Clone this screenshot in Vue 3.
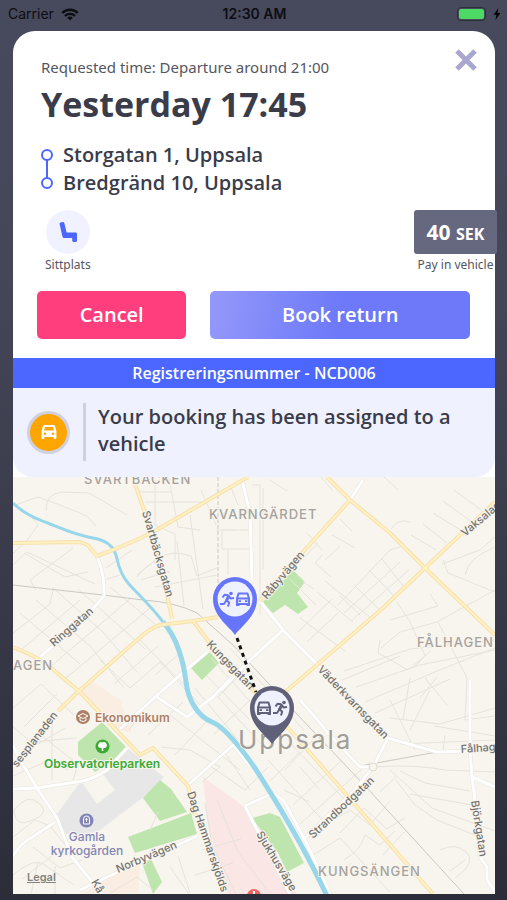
<template>
    <div class="screen">
        <header class="status-bar">
            <div class="carrier">
                <span>Carrier</span>
                <svg class="wifi" viewBox="0 0 18 13" aria-hidden="true">
                    <path d="M1.2 5 A11 11 0 0 1 16.8 5" />
                    <path d="M4 8 A7 7 0 0 1 14 8" />
                    <path class="solid" d="M9 12.6 L6.2 9.8 A4 4 0 0 1 11.8 9.8 Z" />
                </svg>
            </div>
            <span class="clock">12:30 AM</span>
            <div class="power">
                <span class="battery"><span class="charge"></span></span>
                <svg class="bolt" viewBox="0 0 8 12" aria-hidden="true">
                    <path d="M5.4 0 L0.6 6.8 H3.5 L2.4 12 L7.4 4.9 H4.4 Z" />
                </svg>
            </div>
        </header>

        <main class="card">
            <section class="details">
                <div class="heading">
                    <div>
                        <p class="requested">Requested time: Departure around 21:00</p>
                        <h1>Yesterday 17:45</h1>
                    </div>
                    <button class="close" type="button" aria-label="Close">
                        <svg viewBox="0 0 24 24"><path d="M3 3 L21 21 M21 3 L3 21" /></svg>
                    </button>
                </div>

                <div class="route">
                    <svg viewBox="0 0 14 42" aria-hidden="true">
                        <path d="M7 12 V30" />
                        <circle cx="7" cy="7" r="5" />
                        <circle cx="7" cy="35" r="5" />
                    </svg>
                    <ul>
                        <li v-for="stop in stops" :key="stop">{{ stop }}</li>
                    </ul>
                </div>

                <div class="travel">
                    <div class="seat">
                        <span class="seat-icon">
                            <svg viewBox="0 0 20 22" aria-hidden="true">
                                <path d="M1.6 3 Q1.4 1.8 2.6 1.4 L4.8 1 Q6 0.8 6.3 2 L8.6 11.4 H17.6 Q19 11.4 19 12.8 V19.5 Q19 21 17.6 21 H15.6 Q14.2 21 14.2 19.5 V17 H6.4 Q4.8 17 4.4 15.4 Z" />
                            </svg>
                        </span>
                        <span class="caption">Sittplats</span>
                    </div>
                    <div class="price">
                        <span class="amount">40 <small>SEK</small></span>
                        <span class="caption">Pay in vehicle</span>
                    </div>
                </div>

                <div class="actions">
                    <button class="cancel" type="button">Cancel</button>
                    <button class="return" type="button">Book return</button>
                </div>
            </section>

            <p class="registration">Registreringsnummer - NCD006</p>

            <section class="status">
                <span class="badge">
                    <svg viewBox="0 0 16 16" aria-hidden="true">
                        <path fill-rule="evenodd" d="M3.6 1 H12.4 Q13.8 1 14.2 2.4 L15.4 7 V14 Q15.4 15 14.4 15 H13.6 Q12.6 15 12.6 14 V13 H3.4 V14 Q3.4 15 2.4 15 H1.6 Q0.6 15 0.6 14 V7 L1.8 2.4 Q2.2 1 3.6 1 Z M4 3 L3.1 6.6 H12.9 L12 3 Z M4 8.4 A1.3 1.3 0 1 0 4 11 A1.3 1.3 0 1 0 4 8.4 Z M12 8.4 A1.3 1.3 0 1 0 12 11 A1.3 1.3 0 1 0 12 8.4 Z" />
                    </svg>
                </span>
                <p>Your booking has been assigned to a vehicle</p>
            </section>

            <section class="map">
                <svg viewBox="13 477 482 417" role="img" aria-label="Map of Uppsala">
                    <!-- areas -->
                    <path class="cemetery" d="M127 748 L164 777 L150 792 L100 830 L86 834 L64 834 L57 814 L78 785 L107 770 Z" />
                    <path class="land" d="M81 781 L103 774 L115 790 L97 804 Z" />
                    <path class="hospital" d="M203 777 L243 806 L250 818 L297 894 H228 L208 826 Z" />
                    <path class="built" d="M80 693 L92 681 L120 700 L132 733 L110 727 Z M107 877 L140 865 L138 893 H85 Z" />
                    <path class="park" v-for="d in parks" :key="d" :d="d" />

                    <!-- streets -->
                    <path class="minor" v-for="d in minorStreets" :key="d" :d="d" />
                    <path class="rail" v-for="d in railways" :key="d" :d="d" />
                    <path class="rail dashed" d="M218 477 V590" />
                    <path class="street-edge" v-for="d in streets" :key="'e' + d" :d="d" />
                    <path class="street" v-for="d in streets" :key="d" :d="d" />
                    <path class="river" d="M13 503 C25 515 40 520 50 524 S75 535 93 538 S115 550 117 559 S123 577 128 583 S152 607 163 622" />
                    <path class="river wide" d="M163 622 C178 638 184 665 186 682 S197 716 212 722 S250 760 260 776 S300 838 327 896" />
                    <path class="road-edge" v-for="d in roads" :key="'e' + d" :d="d" />
                    <path class="road" v-for="d in roads" :key="d" :d="d" />
                    <circle class="roundabout" cx="373" cy="767" r="4" />

                    <!-- labels -->
                    <text
                        v-for="label in streetLabels"
                        :key="label.name"
                        class="street-name"
                        :transform="`translate(${label.x} ${label.y}) rotate(${label.angle})`"
                    >{{ label.name }}</text>
                    <text
                        v-for="area in districts"
                        :key="area.name"
                        class="district"
                        :x="area.x"
                        :y="area.y"
                    >{{ area.name }}</text>
                    <text class="city" x="238" y="749">Uppsala</text>

                    <g class="place university">
                        <circle cx="83" cy="717" r="7" />
                        <path class="glyph" d="M78 716 L83 713.500 L88 716 L83 718.500 Z M80 718 V720.500 Q83 722.500 86 720.500 V718" />
                        <text x="95" y="722">Ekonomikum</text>
                    </g>
                    <g class="place green">
                        <circle cx="102.500" cy="746.500" r="7" />
                        <path class="glyph filled" d="M101.700 751 V748 H100 A2.500 2.500 0 1 1 102.500 742.500 A2.500 2.500 0 1 1 105 748 H103.300 V751 Z" />
                        <text x="102" y="768" text-anchor="middle">Observatorieparken</text>
                    </g>
                    <g class="place grave">
                        <circle cx="86.500" cy="820.500" r="7" />
                        <path class="glyph" d="M83.500 824 V819 A3 3 0 0 1 89.500 819 V824 Z M86.500 818 V822 M85.300 819.300 H87.700" />
                        <text x="87" y="841" text-anchor="middle">Gamla</text>
                        <text x="87" y="855" text-anchor="middle">kyrkogården</text>
                    </g>
                    <circle class="hospital-mark" cx="254" cy="896" r="7" />
                    <path class="hospital-cross" d="M254 891 V894" />

                    <!-- trip -->
                    <path class="trip" d="M237 638 L256 692" />
                    <g v-for="pin in pins" :key="pin.kind" :class="['pin', pin.kind]" :transform="`translate(${pin.x} ${pin.y})`">
                        <path class="body" d="M0 36 C-4 29 -22 18 -22 0 A22 22 0 1 1 22 0 C22 18 4 29 0 36 Z" />
                        <circle class="face" r="17.500" />
                        <g :transform="`translate(${pin.runner} 0)`">
                            <circle class="head" cx="4" cy="-5.500" r="1.800" />
                            <path class="torso" d="M1.500 -2.500 L-0.500 1.500" />
                            <path class="limb" d="M2 -3 L3.500 -0.500 L7 -1 M1.500 -3.800 L-2.500 -4.200 L-4.500 -1.500 M-0.500 1.500 L2.200 3.500 L1 7.500 M-1 2 L-3 5 L-7 5" />
                        </g>
                        <g :transform="`translate(${pin.car} 0)`">
                            <path class="outline" d="M-4.500 -5.500 H4.500 L6 -0.500 V5 H-6 V-0.500 Z M-6 -0.500 H6" />
                            <path class="wheels" d="M-7 4 H-3.500 V7 H-7 Z M7 4 H3.500 V7 H7 Z M-4.500 1.200 H-2 V3 H-4.500 Z M4.500 1.200 H2 V3 H4.500 Z" />
                        </g>
                    </g>
                </svg>
                <a class="legal" href="#legal">Legal</a>
            </section>
        </main>
    </div>
</template>

<script setup>
const stops = ['Storgatan 1, Uppsala', 'Bredgränd 10, Uppsala'];

const pins = [
    { kind: 'pickup', x: 235, y: 599, runner: -8, car: 8 },
    { kind: 'dropoff', x: 272, y: 708, runner: 8, car: -8 },
];

const parks = [
    'M262 603 L273 613 L285 605 L298 614 L308 607 L297 593 L305 582 L293 570 Z',
    'M190 667 L202 680 L219 663 L210 652 Z',
    'M102 722 L127 748 L110 763 L95 772 L78 755 V742 Z',
    'M160 780 L143 798 L160 821 L187 812 L171 789 Z',
    'M128 837 L191 813 L197 834 L135 853 Z',
    'M141 860 L150 857 L162 882 L153 894 Z',
    'M252 818 L270 813 L280 817 L304 863 L287 872 L278 853 Z',
];

const roads = [
    'M13 543 L79 542 Q87 543 91 549 L97 556 Q125 546 153 532 L248 477',
    'M135 484 L145 513 L166 590 L172 619',
    'M218 617 L193 621 L160 625 Q150 628 137 640 L80 690 L58 711',
    'M13 647 Q40 658 50 667 L80 692 L140 755 L153 748 L188 786 L195 815',
    'M193 621 L213 647 L290 730 L433 894',
    'M327 477 L350 500 L390 533 L425 568 L495 635',
    'M350 500 L303 552 L260 601',
    'M495 502 L425 568 L383 608 L318 664 L270 705',
];

const streets = [
    'M97 556 Q105 575 104 596 L85 618 L40 657',
    'M363 480 L350 500',
    'M260 601 L283 630 L318 665 L360 709 L388 738 L437 752 L470 751 L495 746',
    'M283 630 L250 660 L221 690',
    'M207 652 L163 690 L120 729',
    'M127 748 L107 770 Q95 778 83 781 L37 788 L13 789',
    'M13 745 L20 760 L37 788 L57 818 L72 857 L102 894',
    'M13 856 Q22 842 31 838 L55 822',
    'M157 697 L187 717 L213 697 L233 676',
    'M188 785 L233 745 L250 766',
    'M197 836 L167 850 L107 877 L80 890',
    'M245 806 L273 793 L284 801 L305 840 L330 894',
    'M300 700 Q318 720 328 733 L360 767 L373 767 L388 738',
    'M373 767 L355 790 L303 840',
    'M470 680 L470 750 L472 777 L475 800 L480 857 L487 867 V880 L495 892',
    'M472 777 L495 787',
    'M242 480 L250 513 L252 580',
    'M245 806 L252 820 L290 894',
];

const railways = [
    'M13 585 L103 595 L143 600 Q175 602 197 613 L233 645 L293 710 L367 788 L464 894',
    'M360 766 L437 752 L495 748',
];

const minorStreets = [
    // west
    'M13 506 L38 497 L60 505 L87 516 L96 526',
    'M46 511 Q45 494 62 492 L89 493 L127 515',
    'M13 553 L25 543 L38 525 L30 515',
    'M24 553 L65 577 L88 572 M73 548 L30 580 L36 590',
    'M13 565 L27 552 L95 584',
    'M106 568 L132 550 M107 579 L120 575 M137 575 L153 562 L170 573',
    'M52 587 L103 632 L137 672 M36 600 L90 646 L124 688',
    'M20 613 L80 664 M78 589 L145 649 M13 633 L50 604 L53 590',
    'M22 649 L80 600 M50 667 L130 599 M66 678 L150 608',
    'M110 587 L160 628 M100 660 L130 688 L160 662 L200 705',
    'M140 640 L187 688 M155 675 L180 653 M114 684 L158 646',
    'M13 708 L41 684 L74 715 M24 727 L57 694 M13 727 L31 742 L76 738',
    'M40 734 L62 752 L78 764 L73 780 M52 719 V780 M29 749 L65 728',
    'M13 776 L50 760 L68 770 M14 810 Q28 792 40 804 T23 823 Q14 821 14 810',
    'M13 837 L35 820 L50 826 L66 846 M33 847 L60 868 L82 860 M22 879 L54 854',
    'M13 875 Q35 856 46 866 L74 885 M31 894 L38 862 M55 894 V866',
    // north
    'M138 492 H172 M145 502 H205 M155 480 V525 L175 534 V560 M169 478 L178 527 L200 530',
    'M153 562 Q170 548 191 556 L197 576 L217 568',
    'M137 577 L148 565 M141 580 L170 571 M177 541 L184 606 M155 587 L217 575',
    'M190 515 L203 609 M201 490 L216 525 M216 530 H235 M222 531 V549 H249 M249 530 H222',
    'M252 485 H260 V615 M263 488 V570 M230 485 L238 505 M228 575 V550',
    'M270 480 L287 491 M321 477 L333 491 M307 533 L322 550 M332 535 L355 548',
    'M318 543 L287 575 M340 519 L352 531 M340 546 L325 560 M290 579 L316 605',
    'M303 582 L314 589 M322 555 L315 563 L331 577 M300 618 L345 651',
    'M298 632 L332 599 M307 642 L339 612 M317 592 L353 622 M325 581 L370 617',
    // east
    'M338 605 L390 550 L404 546 M344 613 L400 562 M351 621 L409 570 M361 629 L416 579',
    'M340 596 L360 615 M354 585 L379 609 M369 570 L395 597 M382 559 L404 587',
    'M391 529 Q398 518 410 522 M411 535 L436 550 M423 524 L447 543 M433 513 L462 531',
    'M443 501 L472 522 M454 490 L481 510 M384 477 L398 490',
    'M443 560 L448 573 L495 592 M442 564 L480 550 L495 537 M465 575 Q468 558 495 547',
    'M380 640 L378 653 L408 670 L425 656 L410 622 L397 602',
    'M390 620 L438 606 L430 594 M381 648 L400 632 L437 622 L495 590',
    'M344 671 L410 649 L495 640 M342 680 L400 656 M356 687 L420 665 L495 650',
    'M365 702 L442 669 L495 648 M375 713 L450 679 M410 678 L403 720 M415 666 L430 651',
    'M438 622 L467 678 L465 720 L495 716 M425 678 L447 705 M390 718 L440 724 L495 708',
    'M420 698 L437 677 M434 726 L495 736 M410 730 L430 690 M400 744 L495 740',
    // centre
    'M211 658 L280 735 M230 648 L304 730 M244 671 L218 697 L262 745',
    'M258 655 L238 673 M206 675 L250 720 M195 688 L238 740 M214 734 L250 700',
    'M170 715 L240 770 M183 702 L148 735 M175 755 L208 720 M161 747 L190 750 L220 767 L202 782',
    'M207 764 L245 790 L268 767 M225 753 L250 790 M150 700 L129 730',
    'M285 770 L312 741 M270 781 L300 752 M293 805 L342 760 M300 824 L370 762',
    'M268 760 L325 823 M290 743 L345 800 M300 767 L320 790 M284 790 L310 802',
    // south
    'M205 803 L212 845 L236 894 M217 800 L238 852 L267 890 M202 850 L241 839 M195 875 L233 863',
    'M170 867 L189 894 M158 812 L150 830 M110 893 L137 877 L153 890 M178 856 L190 893',
    'M325 825 L350 810 L370 825 L390 801 M340 833 L364 808 L387 829 L405 818',
    'M344 860 Q361 850 365 835 L380 845 L395 831 M310 857 L340 838 L390 892',
    'M373 767 Q415 764 445 770 L495 772 M390 770 L432 808 L495 831',
    'M400 771 L425 783 L470 791 M410 794 L472 805 M396 780 L415 805 L437 820 L475 835',
    'M380 792 L397 776 M440 850 Q455 842 466 852 T455 878 M450 871 L465 860',
    'M383 855 L404 832 M340 875 L351 863 M445 735 L443 750 M390 700 L415 750',
];

const streetLabels = [
    { name: 'Svartbäcksgatan', x: 142, y: 512, angle: 74 },
    { name: 'Ringgatan', x: 54, y: 647, angle: -41 },
    { name: 'Kungsgatan', x: 206, y: 645, angle: 46 },
    { name: 'Råbyvägen', x: 267, y: 600, angle: -50 },
    { name: 'Vaksalag', x: 465, y: 537, angle: -40 },
    { name: 'Väderkvarnsgatan', x: 317, y: 670, angle: 46 },
    { name: 'Strandbodgatan', x: 313, y: 839, angle: -43 },
    { name: 'Björkgatan', x: 471, y: 801, angle: 81 },
    { name: 'Fålhag', x: 461, y: 753, angle: -4 },
    { name: 'Dag Hammarskjölds', x: 187, y: 793, angle: 71 },
    { name: 'Sjukhusväge', x: 256, y: 834, angle: 59 },
    { name: 'Norbyvägen', x: 118, y: 873, angle: -23 },
    { name: 'sesplanaden', x: 17, y: 768, angle: -52 },
    { name: 'Kå', x: 91, y: 882, angle: 60 },
];

const districts = [
    { name: 'SVARTBÄCKEN', x: 84, y: 484 },
    { name: 'KVARNGÄRDET', x: 209, y: 519 },
    { name: 'FÅLHAGEN', x: 417, y: 647 },
    { name: 'AGEN', x: 13, y: 670 },
    { name: 'KUNGSÄNGEN', x: 318, y: 876 },
];
</script>

<style>
body {
    margin: 0;
}
</style>

<style scoped>
.screen {
    --ink: #3a3c4a;
    --blue: #4b67ff;
    --indigo: #6d79f8;

    box-sizing: border-box;
    min-height: 100vh;
    padding: 0 12px 6px 13px;
    background: linear-gradient(#47495d, #454759 30%, #2c2d39);
    color: var(--ink);
    font-family: 'Open Sans', 'Noto Sans', sans-serif;
}

p,
h1,
ul {
    margin: 0;
    padding: 0;
}

button {
    border: 0;
    padding: 0;
    font-family: inherit;
    cursor: pointer;
}

/* status bar */
.status-bar {
    display: grid;
    grid-template-columns: 1fr auto 1fr;
    align-items: center;
    height: 31px;
    margin: 0 -6px 0 -5px;
    padding-bottom: 3px;
    box-sizing: border-box;
    color: #0d0e12;
    font: 14px/18px Inter, sans-serif;
}
.carrier,
.power {
    display: flex;
    align-items: center;
    gap: 7px;
}
.power {
    justify-content: flex-end;
}
.clock {
    font-weight: 600;
}
.wifi {
    width: 18px;
    height: 13px;
    fill: none;
    stroke: #0d0e12;
    stroke-width: 2.4;
}
.wifi .solid {
    fill: #0d0e12;
    stroke: none;
}
.battery {
    box-sizing: border-box;
    width: 29px;
    height: 14px;
    padding: 1px;
    border: 1px solid #2c3036;
    border-radius: 4px;
}
.charge {
    display: block;
    height: 10px;
    border-radius: 2px;
    background: #4cd964;
}
.bolt {
    width: 8px;
    height: 12px;
}

/* trip card */
.card {
    border-radius: 22px 22px 0 0;
    background: #fff;
}
.details {
    padding: 24px 25px 19px 24px;
}
.heading {
    display: flex;
    justify-content: space-between;
    align-items: flex-start;
    padding-left: 4px;
}
.requested {
    font-family: 'Noto Sans', sans-serif;
    font-size: 15px;
    line-height: 24px;
    color: #54565f;
}
h1 {
    font-size: 34px;
    line-height: 50px;
    font-weight: 700;
}
.close {
    margin: -7px -8px 0 0;
    background: none;
    line-height: 0;
}
.close svg {
    width: 24px;
    height: 24px;
    fill: none;
    stroke: #a9a7cf;
    stroke-width: 5;
}
.route {
    display: flex;
    align-items: center;
    gap: 9px;
    padding: 12px 0 0 3px;
}
.route svg {
    width: 14px;
    height: 42px;
    fill: none;
    stroke: var(--blue);
    stroke-width: 2;
}
.route ul {
    list-style: none;
    font-size: 20px;
    line-height: 28px;
    font-weight: 600;
}
.travel {
    display: flex;
    justify-content: space-between;
    margin: 13px -27px 0 8px;
}
.seat,
.price {
    display: flex;
    flex-direction: column;
    align-items: center;
}
.seat-icon {
    display: flex;
    align-items: center;
    justify-content: center;
    width: 44px;
    height: 44px;
    border-radius: 50%;
    background: #f1f2ff;
}
.seat-icon svg {
    width: 20px;
    height: 22px;
    fill: var(--blue);
}
.caption {
    font-family: 'Noto Sans', sans-serif;
    font-size: 12px;
    line-height: 22px;
    color: #54565f;
}
.amount {
    width: 83px;
    border-radius: 3px;
    background: #66687f;
    color: #fff;
    font-size: 21px;
    line-height: 44px;
    font-weight: 700;
    text-align: center;
}
.amount small {
    font-size: 16px;
    line-height: 20px;
}
.actions {
    display: grid;
    grid-template-columns: 149fr 259fr;
    gap: 24px;
    margin-top: 15px;
}
.actions button {
    height: 48px;
    border-radius: 5px;
    color: #fff;
    font-size: 20px;
    line-height: 24px;
    font-weight: 600;
}
.actions .cancel {
    background: #ff3f7d;
}
.actions .return {
    background: linear-gradient(100deg, #9499fa, var(--indigo) 50%);
}
.registration {
    background: var(--blue);
    color: #fff;
    font-size: 16px;
    line-height: 30px;
    font-weight: 600;
    text-align: center;
}
.status {
    display: flex;
    align-items: center;
    gap: 13px;
    padding: 15px 32px 16px 14px;
    border-radius: 0 0 20px 20px;
    background: #eff1ff;
}
.badge {
    box-sizing: border-box;
    flex: none;
    display: flex;
    align-items: center;
    justify-content: center;
    width: 43px;
    height: 43px;
    border: 3px solid #cfd1e3;
    border-radius: 50%;
    background: #ffa500;
}
.badge svg {
    width: 16px;
    height: 16px;
    fill: #fff;
}
.status p {
    padding: 0 0 4px 12px;
    border-left: 3px solid #cfd1e1;
    font-size: 20px;
    line-height: 27px;
    font-weight: 600;
}

/* map */
.map {
    position: relative;
    line-height: 0;
}
.map > svg {
    width: 100%;
    height: auto;
    background: #f8f5ee;
    font-family: Inter, sans-serif;
}
.map path {
    fill: none;
    stroke-linejoin: round;
}
.map .land {
    fill: #f8f5ee;
}
.map .cemetery {
    fill: #e8e7e7;
}
.map .hospital {
    fill: #fae6e5;
}
.map .built {
    fill: #faeee3;
}
.map .park {
    fill: #bfe5af;
}
.minor {
    stroke: #e6e3dc;
    stroke-width: 1;
}
.rail {
    stroke: #cac8c3;
    stroke-width: 1;
}
.dashed {
    stroke-dasharray: 4 2;
}
.street-edge {
    stroke: #e8e5df;
    stroke-width: 4;
}
.street {
    stroke: #fff;
    stroke-width: 3;
}
.river {
    stroke: #98d6ea;
    stroke-width: 3;
}
.river.wide {
    stroke-width: 5;
}
.road-edge {
    stroke: #f8dfae;
    stroke-width: 4;
}
.road {
    stroke: #fff2c0;
    stroke-width: 2;
}
.roundabout {
    fill: #f8f5ee;
    stroke: #dedbd5;
}
.map text {
    paint-order: stroke;
    stroke: #f8f5ee;
    stroke-width: 2;
    stroke-linejoin: round;
}
.street-name {
    font-size: 11px;
    font-weight: 500;
    fill: #75736f;
}
.district {
    font-size: 13px;
    font-weight: 500;
    letter-spacing: 1px;
    fill: #a5a29d;
}
.city {
    font-size: 26px;
    letter-spacing: 2px;
    fill: #a19e99;
}
.place text {
    font-size: 12px;
    font-weight: 600;
}
.map .grave text {
    font-weight: 500;
}
.place .glyph {
    stroke: #fff;
    stroke-width: 1;
}
.place .filled {
    fill: #fff;
    stroke: none;
}
.university {
    fill: #ad7f66;
}
.green {
    fill: #3daa35;
}
.grave {
    fill: #8385b5;
}
.hospital-mark {
    fill: #f26463;
}
.hospital-cross {
    stroke: #fff;
    stroke-width: 2;
}
.trip {
    stroke: #111;
    stroke-width: 3;
    stroke-dasharray: 4 4;
}
.pickup {
    color: #6675fa;
}
.dropoff {
    color: #606078;
}
.pin .body,
.pin .head,
.pin .wheels {
    fill: currentColor;
}
.pin .face {
    fill: #eff1ff;
}
.pin .torso {
    stroke: currentColor;
    stroke-width: 3;
    stroke-linecap: round;
}
.pin .limb,
.pin .outline {
    stroke: currentColor;
    stroke-width: 2;
}
.legal {
    position: absolute;
    left: 14px;
    bottom: 10px;
    color: #85837e;
    font: 600 11px/14px Inter, sans-serif;
}
</style>
